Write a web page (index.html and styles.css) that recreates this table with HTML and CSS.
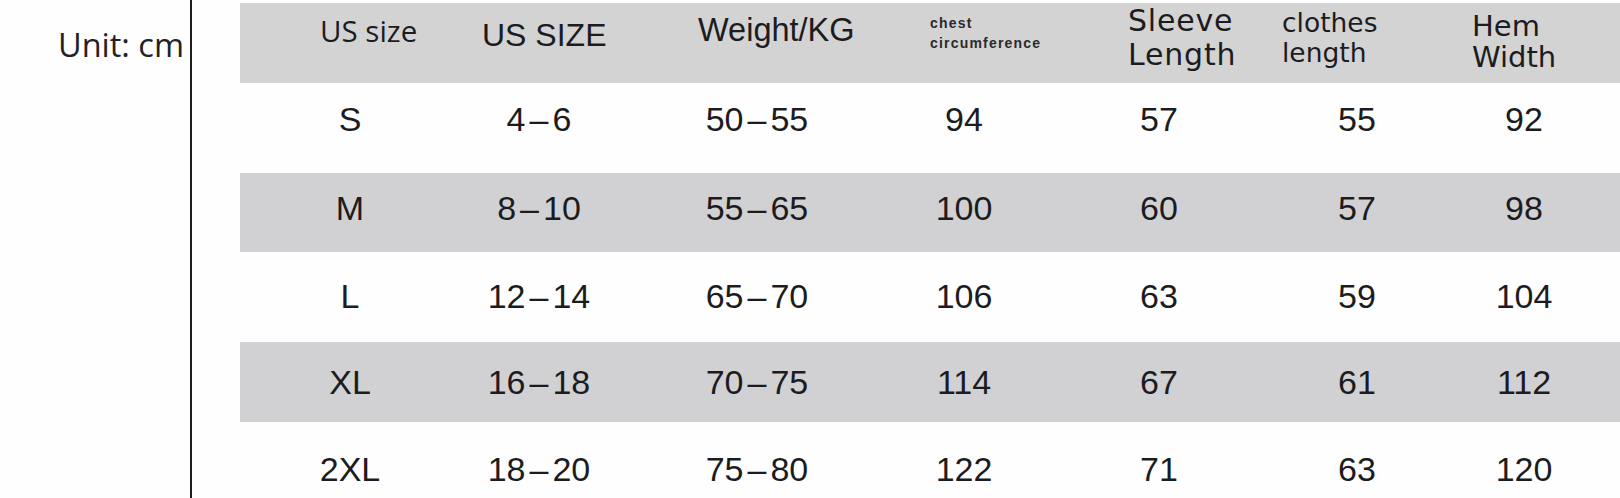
FILE: index.html
```html
<!DOCTYPE html>
<html>
<head>
<meta charset="utf-8">
<link rel="stylesheet" href="styles.css">
</head>
<body>
<div class="page">
  <div class="unit-col"><span class="unit">Unit: cm</span></div>
  <div class="divider"></div>
  <div class="chart">
    <div class="head">
      <div class="h h-ussize">US size</div>
      <div class="h h-us">US SIZE</div>
      <div class="h h-weight">Weight/KG</div>
      <div class="h h-chest">chest<br>circumference</div>
      <div class="h h-sleeve">Sleeve<br>Length</div>
      <div class="h h-clothes">clothes<br>length</div>
      <div class="h h-hem">Hem<br>Width</div>
    </div>
    <div class="row tall r-s"><span>S</span><span>4<span class="d">–</span>6</span><span>50<span class="d">–</span>55</span><span>94</span><span>57</span><span>55</span><span>92</span></div>
    <div class="row band r-m"><span>M</span><span>8<span class="d">–</span>10</span><span>55<span class="d">–</span>65</span><span>100</span><span>60</span><span>57</span><span>98</span></div>
    <div class="row tall r-l"><span>L</span><span>12<span class="d">–</span>14</span><span>65<span class="d">–</span>70</span><span>106</span><span>63</span><span>59</span><span>104</span></div>
    <div class="row band r-xl"><span>XL</span><span>16<span class="d">–</span>18</span><span>70<span class="d">–</span>75</span><span>114</span><span>67</span><span>61</span><span>112</span></div>
    <div class="row tall r-2xl"><span>2XL</span><span>18<span class="d">–</span>20</span><span>75<span class="d">–</span>80</span><span>122</span><span>71</span><span>63</span><span>120</span></div>
  </div>
</div>
</body>
</html>
```
FILE: styles.css
```css
html, body {
  margin: 0;
  padding: 0;
  background: #fefefe;
}
body {
  width: 1620px;
  height: 498px;
  overflow: hidden;
  color: #1c1c1e;
}
.page {
  display: flex;
  height: 498px;
}
.unit-col {
  width: 190px;
  box-sizing: border-box;
  padding-right: 6px;
  padding-top: 29px;
  text-align: right;
}
.unit {
  font-family: "Open Sans", sans-serif;
  font-size: 32.5px;
  line-height: 1;
  color: #222;
}
.divider {
  width: 2px;
  height: 498px;
  background: #1e1e1e;
}
.chart {
  flex: 1;
  margin-left: 48px;
  padding-top: 3px;
}
.head {
  height: 80px;
  background: #d3d3d4;
  box-sizing: border-box;
  padding-left: 80px;
  display: grid;
  grid-template-columns: 162px 216px 232px 198px 154px 190px 1fr;
  align-items: start;
}
.h {
  line-height: 1;
  white-space: nowrap;
}
.h-ussize {
  font-family: "Open Sans", sans-serif;
  font-size: 29.5px;
  margin-top: 13px;
}
.h-us {
  font-family: "Liberation Sans", Arial, sans-serif;
  font-size: 32px;
  margin-top: 16px;
}
.h-weight {
  font-family: "Liberation Sans", Arial, sans-serif;
  font-size: 32.5px;
  margin-top: 11px;
}
.h-chest {
  font-family: "Liberation Sans", Arial, sans-serif;
  font-size: 14px;
  font-weight: bold;
  letter-spacing: 1.2px;
  line-height: 20px;
  margin-top: 10px;
  color: #2a2a2c;
}
.h-sleeve {
  font-family: "DejaVu Sans", sans-serif;
  font-size: 30px;
  letter-spacing: 0.8px;
  line-height: 34px;
  margin-top: 1px;
}
.h-clothes {
  font-family: "DejaVu Sans", sans-serif;
  font-size: 26.5px;
  line-height: 30px;
  margin-top: 5px;
}
.h-hem {
  font-family: "DejaVu Sans", sans-serif;
  font-size: 29px;
  line-height: 31px;
  margin-top: 8px;
}
.row {
  display: grid;
  grid-template-columns: 220px 158px 278px 136px 254px 142px 192px;
  align-items: center;
  font-family: "Liberation Sans", Arial, sans-serif;
  font-size: 34px;
  line-height: 1;
  text-align: center;
  box-sizing: border-box;
}
.d {
  margin: 0 4px;
}
.tall {
  height: 91px;
}
.band {
  height: 79px;
  background: #d1d1d3;
}
.r-s { height: 90px; padding-bottom: 18px; }
.r-m { padding-bottom: 10px; }
.r-l { height: 90px; padding-bottom: 2px; }
.r-xl { height: 80px; padding-bottom: 0; }
.r-2xl { height: 76px; padding-top: 18px; }
```
